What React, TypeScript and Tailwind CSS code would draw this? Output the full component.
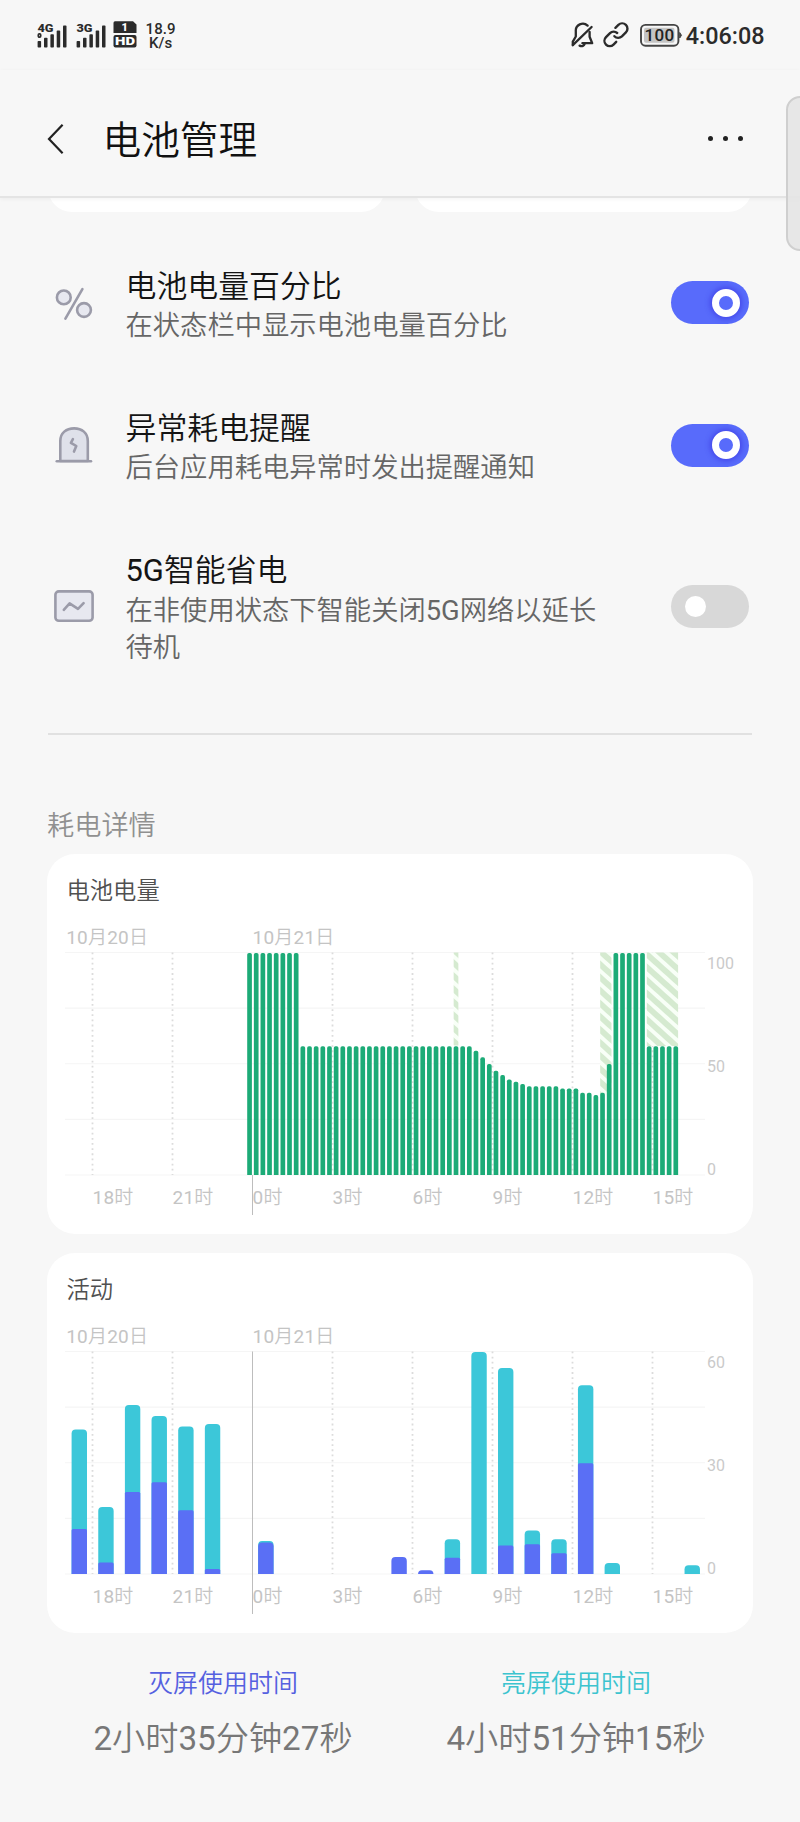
import React from "react";

const SANS = "font-[Roboto,'Noto_Sans_CJK_SC_DemiLight','Noto_Sans_CJK_SC',sans-serif]";

function SignalIcon({ label, data }: { label: string; data?: boolean }) {
  return (
    <svg width="32" height="30" viewBox="0 0 32 30" fill="#2b2b2b">
      <text x="0.5" y="10.6" fontSize="10.5" fontWeight="900" textLength="16" lengthAdjust="spacingAndGlyphs">
        {label}
      </text>
      {data && <rect x="1.3" y="12.9" width="2.4" height="3.2" rx="1" fill="none" stroke="#2b2b2b" strokeWidth="1.7" />}
      <rect x="0.6" y="20" width="3.5" height="6.6" rx="0.8" />
      <rect x="7" y="16.8" width="3.5" height="9.8" rx="0.8" />
      <rect x="13.4" y="13.2" width="3.5" height="13.4" rx="0.8" />
      <rect x="19.7" y="9.6" width="3.5" height="17" rx="0.8" />
      <rect x="26" y="4.6" width="3.5" height="22" rx="0.8" />
    </svg>
  );
}

function HdIcon() {
  return (
    <svg width="24" height="28" viewBox="0 0 24 28">
      <path d="M2 0.2H20L23.5 3.4V12H0.5V1.7Q0.5 0.2 2 0.2Z" fill="#2b2b2b" />
      <rect x="0.5" y="14" width="23" height="12.6" rx="2" fill="#2b2b2b" />
      <text x="11.6" y="10.1" fontSize="11" fontWeight="900" fill="#fff" textAnchor="middle">1</text>
      <text x="2" y="24.4" fontSize="11.5" fontWeight="900" fill="#fff" textLength="20" lengthAdjust="spacingAndGlyphs">HD</text>
    </svg>
  );
}

function StatusBar() {
  return (
    <div className="flex h-[70px] shrink-0 items-start justify-between pl-[37px] pr-[35.5px] text-[#2b2b2b]">
      <div className="flex items-start pt-[21px]">
        <SignalIcon label="4G" data />
        <div className="w-[7px]" />
        <SignalIcon label="3G" />
        <div className="w-[5px]" />
        <HdIcon />
        <div className="ml-[8.5px] flex flex-col items-center pt-[2px] text-[15px] font-medium leading-[13.5px] tracking-[0.1px]">
          <span>18.9</span>
          <span>K/s</span>
        </div>
      </div>
      <div className="flex items-start pt-[22px]">
        <svg width="24" height="26" viewBox="0 0 24 26" fill="none" stroke="#2b2b2b" strokeWidth="2.3" strokeLinecap="round" strokeLinejoin="round">
          <path d="M16.6 3.6A7 7 0 0 0 4.8 9.2V14.5L1.8 19.6V23" />
          <path d="M20.6 5L1.8 23.2" />
          <path d="M18.6 10V14.8L21.2 21.2H11.4" />
          <path d="M8.6 23.6C11 24.8 13.2 23.8 13.8 21.4" />
        </svg>
        <svg className="ml-[8px]" width="26" height="26" viewBox="0 0 26 26" fill="none" stroke="#2b2b2b" strokeWidth="2.4" strokeLinecap="round">
          <path d="M12.4 5.8L15.4 2.9A5.3 5.3 0 0 1 22.9 10.4L18.9 14.4A5.3 5.3 0 0 1 11.4 14.2" />
          <path d="M14.2 11A5.3 5.3 0 0 0 7 11.1L3 15.1A5.3 5.3 0 0 0 10.5 22.6L13.2 19.8" />
        </svg>
        <svg className="ml-[10px] mt-[1px]" width="44" height="25" viewBox="0 0 44 25">
          <rect x="2" y="1.9" width="37.4" height="20.8" rx="4.5" fill="none" stroke="#444" strokeWidth="1.9" />
          <rect x="5" y="4.8" width="30.5" height="15" rx="2" fill="#c4c4c4" />
          <path d="M40.7 9.5L42.5 12.3L40.7 15Z" fill="#444" stroke="#444" />
          <text x="20.4" y="18.4" fontSize="17" fontWeight="500" fill="#222" textAnchor="middle" letterSpacing="0.3">100</text>
        </svg>
        <span className="ml-[3px] text-[23.4px] font-medium leading-[29px]">4:06:08</span>
      </div>
    </div>
  );
}

function Header() {
  return (
    <header className="relative z-10 flex h-[128px] shrink-0 items-center border-b-2 border-[#e4e4e4] bg-[#f7f7f7] pl-[47px] pr-[57px] shadow-[0_1px_4px_rgba(0,0,0,0.05)]">
      <svg className="mt-[12px]" width="18" height="32" viewBox="0 0 18 32" fill="none" stroke="#222" strokeWidth="2.2">
        <path d="M15.6 1.7L2 16L15.6 30.2" />
      </svg>
      <h1 className="ml-[37.5px] mt-[15px] flex-1 text-[38.7px] font-normal leading-[48px] text-[#111]">电池管理</h1>
      <div className="mt-[11px] flex gap-[9.6px]">
        <i className="size-[5.4px] rounded-full bg-[#222]" />
        <i className="size-[5.4px] rounded-full bg-[#222]" />
        <i className="size-[5.4px] rounded-full bg-[#222]" />
      </div>
    </header>
  );
}

const iconProps = {
  width: 40,
  height: 40,
  viewBox: "0 0 40 40",
  fill: "#e7e8f0",
  stroke: "#9b9ba9",
  strokeWidth: 2.6,
  strokeLinecap: "round" as const,
  strokeLinejoin: "round" as const,
};

const PercentIcon = () => (
  <svg {...iconProps}>
    <circle cx="9.8" cy="13.4" r="6.9" />
    <circle cx="30" cy="26" r="6.9" />
    <path d="M28.4 5.2L11.4 34.6" fill="none" />
  </svg>
);

const AlertIcon = () => (
  <svg {...iconProps}>
    <path d="M6.3 35V15C6.3 6.8 12.3 2.4 20.1 2.4S33.8 6.8 33.8 15V35Z" fill="#dfe1ea" />
    <path d="M2.8 35.2H37" />
    <path d="M18.9 13.2L16.9 16.8L22.3 20L20 25.6" fill="none" />
  </svg>
);

const NetworkIcon = () => (
  <svg {...iconProps}>
    <rect x="1.4" y="4.4" width="37.2" height="29.4" rx="3.4" />
    <path d="M9.8 22.8L15.6 16.4L24 21.8L29.6 16.2" fill="none" />
  </svg>
);

function Toggle({ on }: { on: boolean }) {
  return on ? (
    <div className="flex h-[43px] w-[78px] items-center justify-end rounded-full bg-[#586bfb] pr-[9px]">
      <div className="size-[28px] rounded-full border-[7px] border-white bg-[#586bfb] shadow-[0_0_5px_2px_rgba(50,40,220,0.5)]" />
    </div>
  ) : (
    <div className="flex h-[43px] w-[78px] items-center rounded-full bg-[#d8d8d8] pl-[13.5px]">
      <div className="size-[21px] rounded-full bg-white" />
    </div>
  );
}

function SettingRow({ icon, title, desc, on }: { icon: React.ReactNode; title: string; desc: string; on: boolean }) {
  return (
    <div className="flex items-center">
      {icon}
      <div className="-mb-[1.6px] ml-[31.5px] w-[490px] pt-[1.6px]">
        <div className="text-[30.9px] leading-[42px] text-[#141414]">{title}</div>
        <div className="pt-[0.5px] text-[27.3px] leading-[37px] text-[#666]">{desc}</div>
      </div>
      <div className="-mt-[2px] ml-auto">
        <Toggle on={on} />
      </div>
    </div>
  );
}

const HOURS = ["18时", "21时", "0时", "3时", "6时", "9时", "12时", "15时"];
const TOP = 98.5;
const BOTTOM = 321;

function ChartFrame({ title, ticks, markerTop, children }: { title: string; ticks: string[]; markerTop: number; children: React.ReactNode }) {
  return (
    <section className="relative h-[380px] w-[706px] rounded-[28px] bg-white">
      <svg className="block" width="706" height="380" viewBox="0 0 706 380">
        <text x="19.5" y="44.9" fontSize="23.3" fill="#505050">{title}</text>
        {[0, 1, 2, 3, 4].map((i) => (
          <path key={i} d={`M18 ${TOP + i * 55.62}H658`} stroke="#f5f5f5" strokeWidth="1.2" />
        ))}
        {HOURS.map((h, i) =>
          i === 2 ? null : <path key={h} d={`M${45.5 + i * 80} ${TOP}V${BOTTOM}`} stroke="#dcdcdc" strokeWidth="1.8" strokeDasharray="1.8 3.35" />
        )}
        <path d={`M205.5 ${markerTop}V361`} stroke="#bdbdbd" strokeWidth="1" />
        {children}
        <g fontSize="19" fill="#c4c4c4" letterSpacing="0.2">
          <text x="19.2" y="89.6">10月20日</text>
          <text x="205.6" y="89.6">10月21日</text>
          {HOURS.map((h, i) => (
            <text key={h} x={45.5 + i * 80} y="350.4">{h}</text>
          ))}
        </g>
        <g fontSize="16" fill="#cacaca">
          {ticks.map((t, i) => (
            <text key={t} x="660" y={114.6 + i * 103.2}>{t}</text>
          ))}
        </g>
      </svg>
    </section>
  );
}

const LEVELS: number[] = [
  ...Array<number>(8).fill(100),
  ...Array<number>(26).fill(58),
  56, 53, 50, 47, 45, 43, 42, 41,
  40, 40, 40, 40, 40, 39, 39, 39, 37, 37, 36, 37, 50,
  100, 100, 100, 100, 100,
  58, 58, 58, 58, 58,
];

const barX = (i: number) => 200.2 + i * 6.66;

function topRounded(x: number, y: number, w: number, bottom: number, r: number) {
  const q = Math.min(r, bottom - y);
  return `M${x} ${bottom}V${y + q}Q${x} ${y} ${x + q} ${y}H${x + w - q}Q${x + w} ${y} ${x + w} ${y + q}V${bottom}Z`;
}

function BatteryChart() {
  return (
    <ChartFrame title="电池电量" ticks={["100", "50", "0"]} markerTop={BOTTOM}>
      <defs>
        <pattern id="charging" width="9.7" height="9.7" patternUnits="userSpaceOnUse" patternTransform="rotate(42)">
          <rect width="9.7" height="9.7" fill="#f8fff7" />
          <rect width="9.7" height="5.8" fill="#d5ead0" />
        </pattern>
      </defs>
      <rect x={barX(31)} y={TOP} width="4.7" height="93" fill="url(#charging)" />
      <rect x={barX(53)} y={TOP} width="11.3" height="142" fill="url(#charging)" />
      <rect x={barX(60)} y={TOP} width="31.3" height="93.5" fill="url(#charging)" />
      {LEVELS.map((v, i) => (
        <path key={i} d={topRounded(barX(i), BOTTOM - v * 2.22, 4.7, BOTTOM, 1.8)} fill="#1cab77" />
      ))}
    </ChartFrame>
  );
}

/* [hour slot, total height, screen-off height] */
const ACTIVITY: [number, number, number][] = [
  [0, 144.5, 45], [1, 67, 11.5], [2, 169, 82], [3, 158, 91.7], [4, 147.5, 63.7], [5, 150, 5],
  [7, 33, 31.5], [12, 17, 17], [13, 3.8, 3.8], [14, 34.7, 16.3], [15, 222, 0], [16, 206, 28.4],
  [17, 43.4, 29.8], [18, 34.7, 20.8], [19, 188.7, 110.8], [20, 11, 0], [23, 8.7, 0],
];

function ActivityChart() {
  return (
    <ChartFrame title="活动" ticks={["60", "30", "0"]} markerTop={TOP}>
      {ACTIVITY.map(([slot, total, off]) => {
        const x = 24.6 + slot * 26.65;
        return (
          <g key={slot}>
            {total > off && <path d={topRounded(x, BOTTOM - total, 15.4, BOTTOM, 4)} fill="#3cc7d9" />}
            {off > 0 && <path d={topRounded(x, BOTTOM - off, 15.4, BOTTOM, total - off < 2 ? 4 : 1.5)} fill="#5a6ff5" />}
          </g>
        );
      })}
    </ChartFrame>
  );
}

export default function App() {
  return (
    <div className={`relative flex h-[1822px] w-[800px] flex-col overflow-hidden bg-[#f7f7f7] ${SANS}`}>
      <StatusBar />
      <Header />
      <div className="flex h-[14px] shrink-0 justify-between overflow-hidden px-[48px]">
        <div className="-mt-[20px] h-[34px] w-[337px] rounded-b-[24px] bg-white" />
        <div className="-mt-[20px] h-[34px] w-[337px] rounded-b-[24px] bg-white" />
      </div>

      <div className="mt-[52px] flex flex-col gap-[62.9px] pl-[54px] pr-[51px]">
        <SettingRow icon={<PercentIcon />} title="电池电量百分比" desc="在状态栏中显示电池电量百分比" on />
        <SettingRow icon={<AlertIcon />} title="异常耗电提醒" desc="后台应用耗电异常时发出提醒通知" on />
        <SettingRow icon={<NetworkIcon />} title="5G智能省电" desc="在非使用状态下智能关闭5G网络以延长待机" on={false} />
      </div>

      <div className="mx-[48px] mt-[67.5px] h-[2px] shrink-0 bg-[#e1e1e1]" />

      <h2 className="ml-[47px] mt-[71px] text-[27.2px] font-normal leading-[40px] text-[#909090]">耗电详情</h2>
      <div className="mt-[8px] flex flex-col gap-[19px] pl-[47px]">
        <BatteryChart />
        <ActivityChart />
      </div>

      <div className="-ml-[1px] mt-[32px] grid w-[706px] grid-cols-2 self-center text-center">
        <div>
          <div className="text-[25px] leading-[38px] text-[#5560e0]">灭屏使用时间</div>
          <div className="mt-[14px] text-[33.2px] leading-[44px] text-[#777]">2小时35分钟27秒</div>
        </div>
        <div>
          <div className="text-[25px] leading-[38px] text-[#3cc4cf]">亮屏使用时间</div>
          <div className="mt-[14px] text-[33.2px] leading-[44px] text-[#777]">4小时51分钟15秒</div>
        </div>
      </div>

      <div className="absolute -right-[16px] top-[96px] z-20 h-[155px] w-[30px] rounded-[14px] border-2 border-[#cfcfcf] bg-[#e4e4e4]/90" />
    </div>
  );
}
